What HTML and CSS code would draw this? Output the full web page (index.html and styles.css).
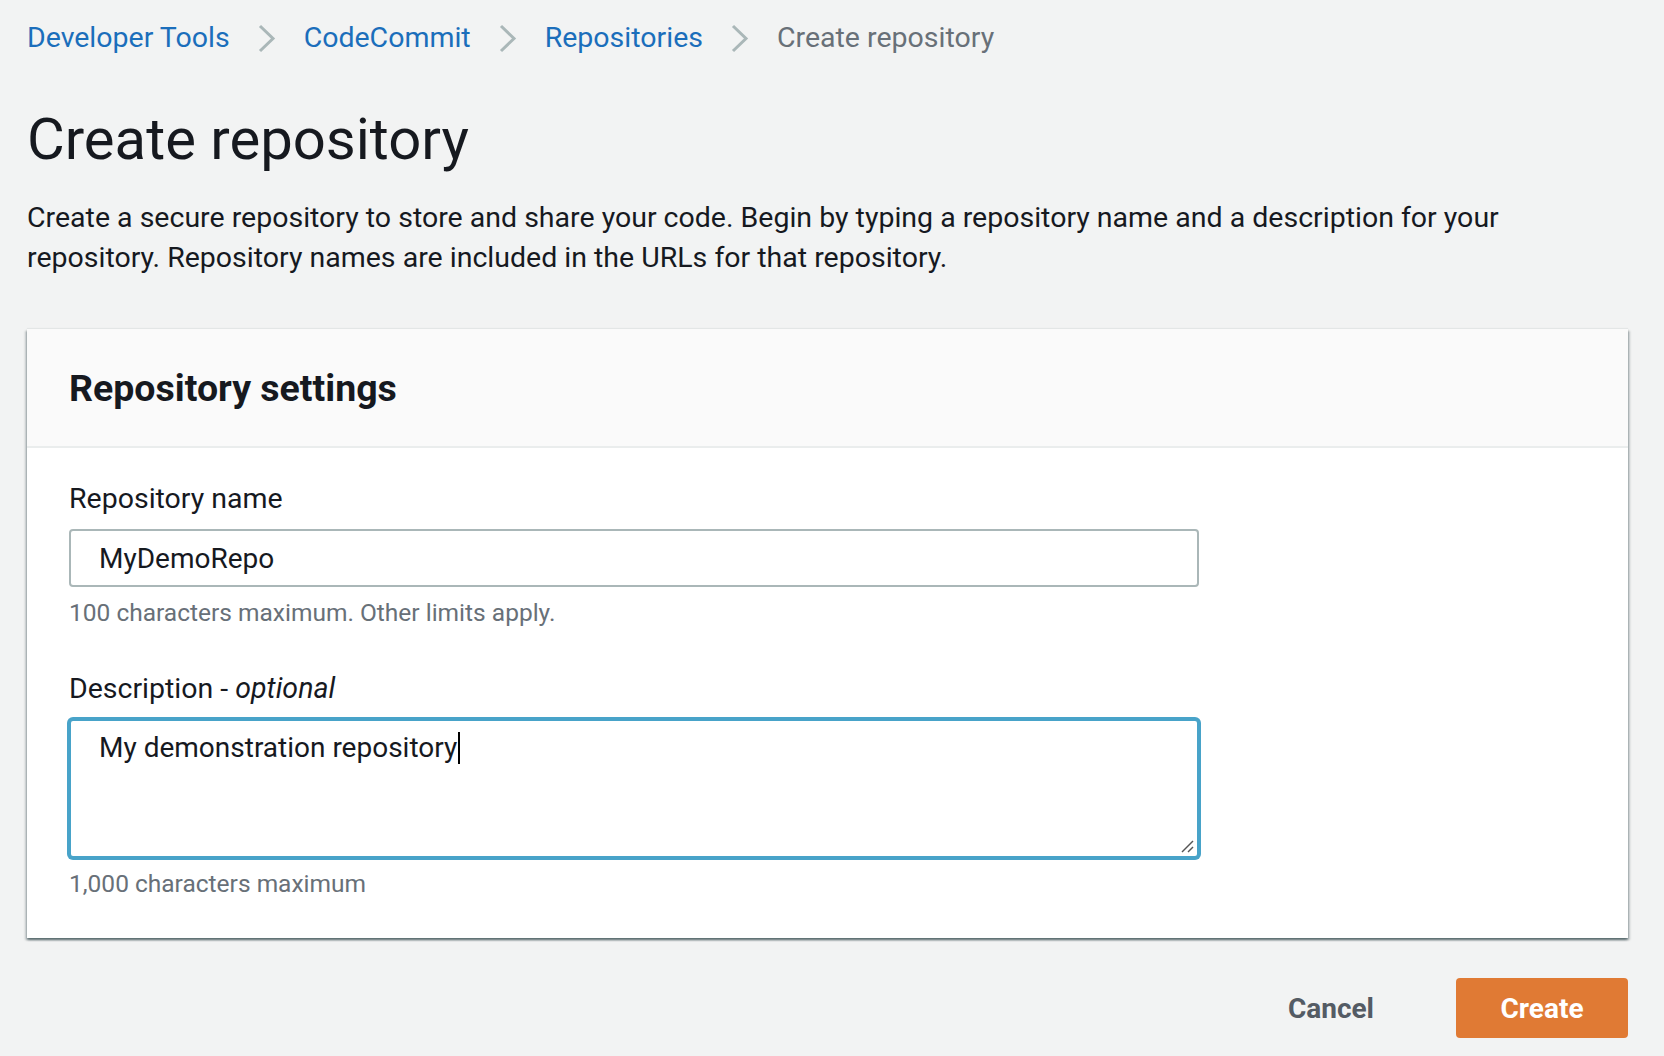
FILE: index.html
```html
<!DOCTYPE html>
<html lang="en">
<head>
<meta charset="utf-8">
<title>Create repository</title>
<link rel="stylesheet" href="styles.css">
</head>
<body>
<div class="page">
  <nav class="breadcrumbs">
    <a class="crumb" href="#">Developer Tools</a>
    <svg class="chev" viewBox="0 0 19 29"><polyline points="3,2 16,14.5 3,27" fill="none" stroke="#aab7b8" stroke-width="3"/></svg>
    <a class="crumb" href="#">CodeCommit</a>
    <svg class="chev" viewBox="0 0 19 29"><polyline points="3,2 16,14.5 3,27" fill="none" stroke="#aab7b8" stroke-width="3"/></svg>
    <a class="crumb" href="#">Repositories</a>
    <svg class="chev" viewBox="0 0 19 29"><polyline points="3,2 16,14.5 3,27" fill="none" stroke="#aab7b8" stroke-width="3"/></svg>
    <span class="crumb current">Create repository</span>
  </nav>

  <h1 class="title">Create repository</h1>
  <p class="intro">Create a secure repository to store and share your code. Begin by typing a repository name and a description for your repository. Repository names are included in the URLs for that repository.</p>

  <section class="card">
    <header class="card-header">
      <h2 class="card-title">Repository settings</h2>
    </header>
    <div class="card-body">
      <div class="field">
        <label class="label">Repository name</label>
        <input class="input" type="text" value="MyDemoRepo">
        <p class="hint">100 characters maximum. Other limits apply.</p>
      </div>
      <div class="field">
        <label class="label">Description - <i>optional</i></label>
        <div class="textarea">My demonstration repository<span class="caret"></span>
          <svg class="grip" viewBox="0 0 14 14"><line x1="13" y1="2" x2="2" y2="13" stroke="#555" stroke-width="1.5"/><line x1="13" y1="8" x2="8" y2="13" stroke="#555" stroke-width="1.5"/></svg>
        </div>
        <p class="hint">1,000 characters maximum</p>
      </div>
    </div>
  </section>

  <div class="actions">
    <button class="btn btn-link" type="button">Cancel</button>
    <button class="btn btn-primary" type="button">Create</button>
  </div>
</div>
</body>
</html>
```
FILE: styles.css
```css
* { box-sizing: border-box; }

html, body {
  margin: 0;
  padding: 0;
  background: #f2f3f3;
}

body {
  font-family: Roboto, "Liberation Sans", Arial, sans-serif;
  color: #16191f;
}

.page {
  padding: 18px 36px 0 27px;
}

.breadcrumbs {
  display: flex;
  align-items: center;
  height: 40px;
  font-size: 28.5px;
  line-height: 40px;
}

.crumb {
  color: #1b6ebb;
  text-decoration: none;
  white-space: nowrap;
}

.crumb.current {
  color: #687078;
}

.chev {
  width: 19px;
  height: 29px;
  margin: 0 28px 0 27px;
  flex: none;
}

.title {
  margin: 47px 0 0;
  font-size: 58px;
  line-height: 68px;
  font-weight: 400;
  color: #16191f;
}

.intro {
  margin: 25px 0 0;
  max-width: 1500px;
  font-size: 28.5px;
  line-height: 40px;
  color: #16191f;
}

.card {
  margin-top: 51px;
  background: #fff;
  box-shadow: 0 2px 2px rgba(0, 28, 36, 0.45), 2px 2px 2px rgba(0, 28, 36, 0.18), -2px 2px 2px rgba(0, 28, 36, 0.18), 0 -1px 1px rgba(0, 28, 36, 0.06);
}

.card-header {
  background: #fafafa;
  border-bottom: 2px solid #eaeded;
  padding: 37px 42px 36px;
}

.card-title {
  margin: 0;
  font-size: 37.5px;
  line-height: 44px;
  font-weight: 700;
  color: #16191f;
}

.card-body {
  padding: 31px 42px 38px;
}

.field + .field {
  margin-top: 40px;
}

.label {
  display: block;
  font-size: 28.5px;
  line-height: 40px;
  color: #16191f;
  margin-bottom: 10px;
}

.label i {
  font-style: italic;
}

.input {
  display: block;
  width: 1130px;
  height: 58px;
  border: 2px solid #aab7b8;
  border-radius: 4px;
  padding: 0 26px 0 28px;
  font-family: inherit;
  font-size: 28px;
  color: #16191f;
  background: #fff;
  outline: none;
}

.hint {
  margin: 10px 0 0;
  font-size: 24.5px;
  line-height: 32px;
  color: #687078;
}

.textarea {
  position: relative;
  width: 1130px;
  height: 139px;
  border: 2px solid #48a3c9;
  box-shadow: 0 0 0 2px #48a3c9;
  border-radius: 4px;
  padding: 7px 28px;
  font-size: 28px;
  line-height: 40px;
  color: #16191f;
  background: #fff;
}

.caret {
  display: inline-block;
  width: 2px;
  height: 32px;
  background: #000;
  vertical-align: -7px;
  margin-left: 1px;
}

.grip {
  position: absolute;
  right: 3px;
  bottom: 3px;
  width: 14px;
  height: 14px;
}

.actions {
  display: flex;
  justify-content: flex-end;
  align-items: center;
  gap: 40px;
  margin-top: 40px;
}

.btn {
  height: 60px;
  border: none;
  border-radius: 4px;
  font-family: inherit;
  font-size: 28px;
  font-weight: 700;
  cursor: pointer;
}

.btn-link {
  background: transparent;
  color: #545b64;
  padding: 0 42px;
}

.btn-primary {
  width: 172px;
  background: #e07a34;
  color: #fff;
}
```
